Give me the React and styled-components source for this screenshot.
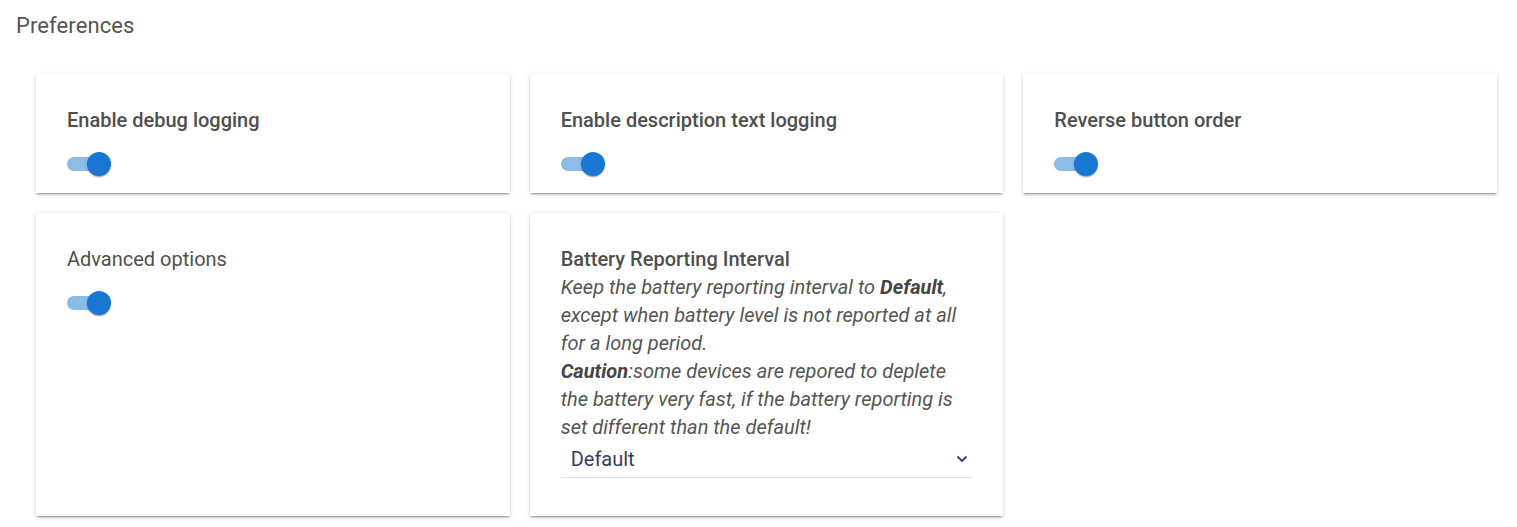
import React from 'react';
import styled, { createGlobalStyle } from 'styled-components';

const GlobalStyle = createGlobalStyle`
  html, body {
    margin: 0;
    padding: 0;
    background: #fff;
    font-family: Roboto, 'Liberation Sans', sans-serif;
  }
`;

const Page = styled.div`
  padding: 12px 20px 12px 16px;
`;

const Title = styled.h2`
  margin: 0;
  font-size: 22px;
  line-height: 28px;
  font-weight: 400;
  letter-spacing: 0.1px;
  color: #555;
`;

const Grid = styled.div`
  display: grid;
  grid-template-columns: repeat(3, 1fr);
  gap: 20px;
  margin: 34px 0 0 20px;
`;

const Card = styled.div`
  background: #fff;
  padding: ${(p) => (p.$tall ? '32px 31px 38px' : '32px 31px 17px')};
  box-shadow: 0 3px 1px -2px rgba(0, 0, 0, 0.2), 0 2px 2px 0 rgba(0, 0, 0, 0.14),
    0 1px 5px 0 rgba(0, 0, 0, 0.12);
  color: #555;
`;

const Label = styled.div`
  font-size: 20px;
  line-height: 28px;
  font-weight: ${(p) => (p.$bold ? 500 : 400)};
  color: #4f4f4f;
`;

const Desc = styled.div`
  font-size: 20px;
  line-height: 28px;
  font-style: italic;
  color: #555;

  b {
    font-weight: 700;
    color: #444;
  }
`;

const SwitchWrap = styled.div`
  position: relative;
  width: 46px;
  height: 24px;
  margin-top: 18px;
`;

const Track = styled.div`
  position: absolute;
  left: 0;
  top: 5px;
  width: 40px;
  height: 14px;
  border-radius: 7px;
  background: #8cbbe6;
`;

const Thumb = styled.div`
  position: absolute;
  left: 20px;
  top: 0;
  width: 24px;
  height: 24px;
  border-radius: 50%;
  background: #1976d2;
  box-shadow: 0 2px 1px -1px rgba(0, 0, 0, 0.2), 0 1px 1px 0 rgba(0, 0, 0, 0.14),
    0 1px 3px 0 rgba(0, 0, 0, 0.12);
`;

const Select = styled.div`
  display: flex;
  align-items: center;
  justify-content: space-between;
  height: 35px;
  padding: 0 4px 1px 10px;
  border-bottom: 1px solid #ddd;
  color: #2e3f66;
  font-size: 20px;
`;

const Toggle = () => (
  <SwitchWrap>
    <Track />
    <Thumb />
  </SwitchWrap>
);

export default function App() {
  return (
    <>
      <GlobalStyle />
      <Page>
        <Title>Preferences</Title>
        <Grid>
          <Card>
            <Label $bold>Enable debug logging</Label>
            <Toggle />
          </Card>
          <Card>
            <Label $bold>Enable description text logging</Label>
            <Toggle />
          </Card>
          <Card>
            <Label $bold>Reverse button order</Label>
            <Toggle />
          </Card>
          <Card>
            <Label>Advanced options</Label>
            <Toggle />
          </Card>
          <Card $tall>
            <Label $bold>Battery Reporting Interval</Label>
            <Desc>
              Keep the battery reporting interval to <b>Default</b>, except when battery level is not
              reported at all for a long period.
              <br />
              <b>Caution</b>:some devices are repored to deplete the battery very fast, if the
              battery reporting is set different than the default!
            </Desc>
            <Select>
              <span>Default</span>
              <svg width="12" height="8" viewBox="0 0 12 8">
                <path d="M1.5 1.5 L6 6 L10.5 1.5" fill="none" stroke="#2e3f66" strokeWidth="1.8" />
              </svg>
            </Select>
          </Card>
        </Grid>
      </Page>
    </>
  );
}
